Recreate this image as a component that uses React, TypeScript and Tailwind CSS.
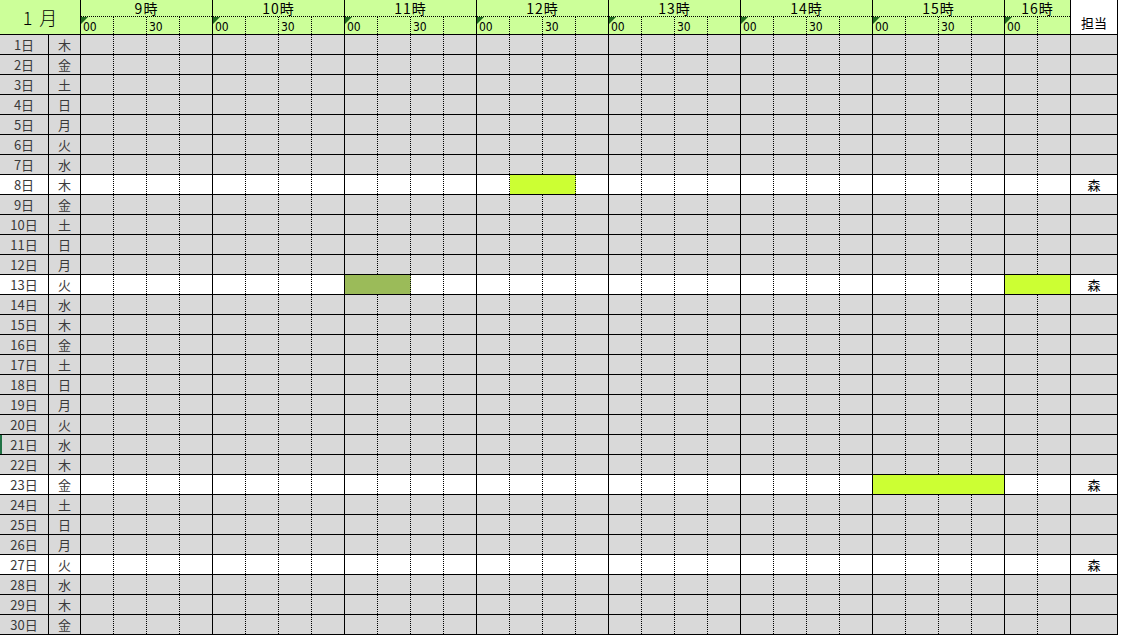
import React from 'react'

const WEEK = ['木', '金', '土', '日', '月', '火', '水']
const HOURS = [9, 10, 11, 12, 13, 14, 15, 16]
const DAYS = Array.from({ length: 31 }, (_, i) => i + 1)

// rows that were filled in (white), with the coloured quarter-hour slots
const FILLED: Record<number, { who: string; marks: Record<number, 'lime' | 'olive'> }> = {
  8: { who: '森', marks: { 13: 'lime', 14: 'lime' } },
  13: { who: '森', marks: { 8: 'olive', 9: 'olive', 28: 'lime', 29: 'lime' } },
  23: { who: '森', marks: { 24: 'lime', 25: 'lime', 26: 'lime', 27: 'lime' } },
  27: { who: '森', marks: {} },
}

const COLORS = {
  lime: { bg: 'bg-[#ccff33]', border: 'border-[#ccff33]' },
  olive: { bg: 'bg-[#9bbb59]', border: 'border-[#9bbb59]' },
}

const SLOTS = HOURS.flatMap((h) => (h === 16 ? [0, 1] : [0, 1, 2, 3]).map((q) => ({ h, q })))

function HourHeader({ hour }: { hour: number }) {
  const quarters = hour === 16 ? [0, 1] : [0, 1, 2, 3]
  return (
    <div className="flex flex-col border-r border-black">
      <div className="h-[17px] border-b border-dotted border-black flex items-center justify-center text-[14px] leading-[16px] text-black tracking-[1px]">
        {hour}時
      </div>
      <div className="flex h-[17px]">
        {quarters.map((q, i) => (
          <div
            key={q}
            className={
              'relative h-full flex items-end pl-[2px] text-[12px] leading-[14px] font-["DejaVu_Sans_Condensed","Liberation_Sans",sans-serif] ' +
              (i === quarters.length - 1 ? 'w-[32px]' : 'w-[33px] border-r border-dotted border-black')
            }
          >
            {q === 0 && (
              <svg className="absolute left-0 top-0" width="7" height="7" viewBox="0 0 7 7">
                <polygon points="0,0 7,0 0,7" fill="#1f6b1f" />
              </svg>
            )}
            {q === 0 ? '00' : q === 2 ? '30' : ''}
          </div>
        ))}
      </div>
    </div>
  )
}

function DayRow({ day }: { day: number }) {
  const filled = FILLED[day]
  const rowBg = filled ? 'bg-white' : 'bg-[#d9d9d9]'
  return (
    <div className={'flex h-[20px] border-b border-black shrink-0 ' + rowBg}>
      <div className="relative w-[49px] h-full border-r border-black flex items-center justify-center text-[13px] leading-[18px] text-[#3a3a3a]">
        {day === 21 && <div className="absolute left-0 top-0 h-full w-[2px] bg-[#217346]" />}
        {day}日
      </div>
      <div className="w-[32px] h-full border-r border-black flex items-center justify-center text-[13px] leading-[18px] text-[#3a3a3a]">
        {WEEK[(day - 1) % 7]}
      </div>
      {SLOTS.map(({ h, q }, idx) => {
        const mark = filled?.marks[idx]
        const nextMark = filled?.marks[idx + 1]
        const lastOfHour = h === 16 ? q === 1 : q === 3
        let cls = 'w-[33px] h-full border-r '
        cls += lastOfHour ? 'border-solid ' : 'border-dotted '
        if (mark) {
          cls += COLORS[mark].bg + ' '
          cls += !lastOfHour && nextMark === mark ? COLORS[mark].border : 'border-black'
        } else {
          cls += 'border-black'
        }
        return <div key={idx} className={cls} />
      })}
      <div className="w-[47px] h-full border-r border-black flex items-center justify-center text-[13px] leading-[18px] text-black">
        {filled?.who}
      </div>
    </div>
  )
}

export default function App() {
  return (
    <div className="w-[1121px] h-[635px] overflow-hidden bg-white font-['Noto_Sans_CJK_JP',sans-serif] text-black">
      {/* header */}
      <div className="flex h-[35px] border-b border-black w-[1118px]">
        <div className="w-[81px] h-full bg-[#ccff99] border-r border-black flex items-center justify-center text-[18px] leading-[22px] font-light">
          <span className="tracking-[7px]">1</span>月
        </div>
        <div className="flex h-full bg-[#ccff99]">
          {HOURS.map((h) => (
            <HourHeader key={h} hour={h} />
          ))}
        </div>
        <div className="w-[47px] h-full border-r border-black flex items-end justify-center pb-[3px] text-[13px] leading-[16px]">
          担当
        </div>
      </div>
      {/* days */}
      <div className="flex flex-col w-[1118px]">
        {DAYS.map((d) => (
          <DayRow key={d} day={d} />
        ))}
      </div>
    </div>
  )
}
